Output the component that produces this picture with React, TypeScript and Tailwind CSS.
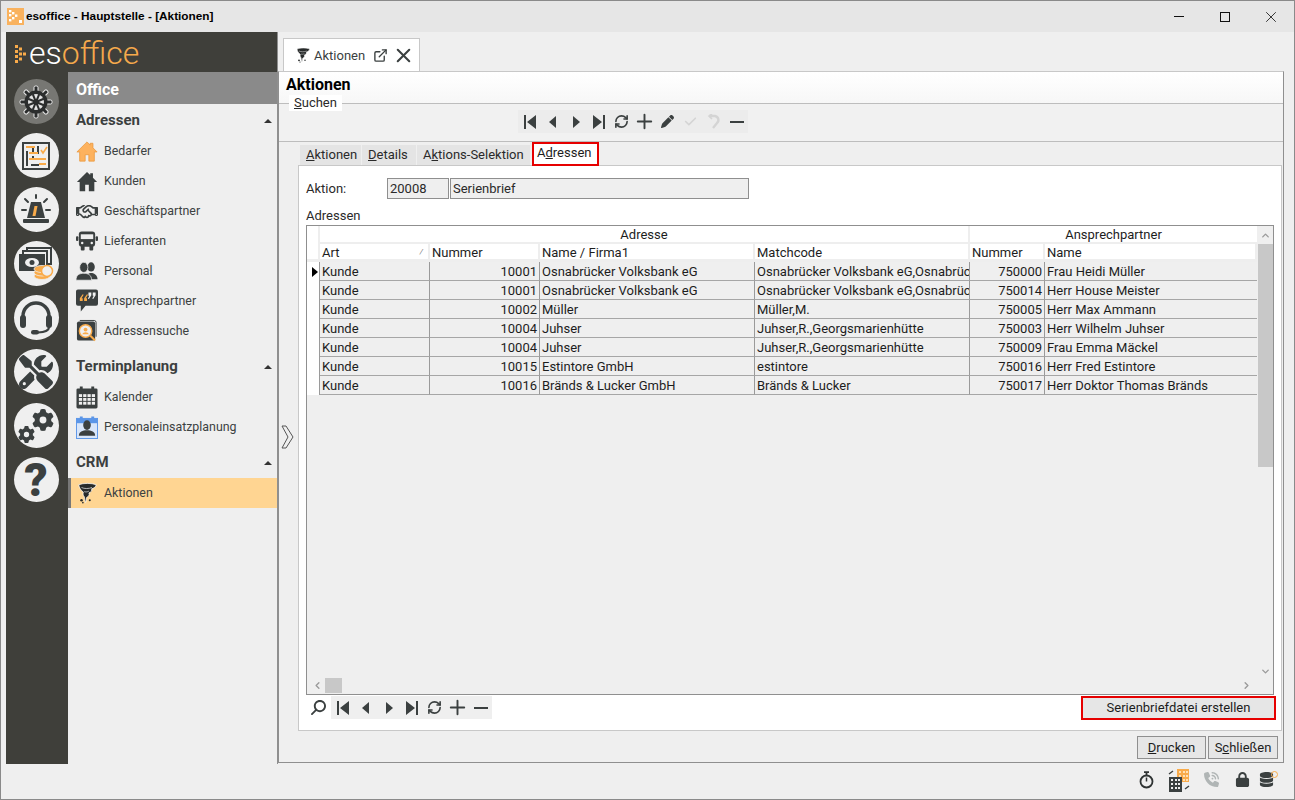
import React from 'react';
import { FaScrewdriverWrench, FaGear, FaRegHandshake, FaPhoneVolume, FaLock, FaDatabase, FaPen, FaCheck, FaMagnifyingGlass } from 'react-icons/fa6';
import { ExternalLink, X, Plus, RefreshCw, ChevronUp, ChevronDown, ChevronLeft, ChevronRight } from 'lucide-react';

const DARK = '#3b4040';
const ORANGE = '#f9ab4a';

const House: React.FC<{ fill: string; stroke?: string }> = ({ fill, stroke }) => (
  <svg width="23" height="23" viewBox="0 0 24 24">
    <polygon
      points="12,1.5 1,12.5 4,12.5 4,22.5 10,22.5 10,15.5 14,15.5 14,22.5 20,22.5 20,12.5 23,12.5 18.5,8 18.5,3 15.5,3 15.5,5"
      fill={fill}
      stroke={stroke}
      strokeWidth="0.8"
    />
  </svg>
);

const TruckFront = () => (
  <svg width="23" height="20" viewBox="0 0 23 20">
    <rect x="3" y="0" width="17" height="16" rx="3" fill={DARK} />
    <rect x="0" y="5" width="2.5" height="5" rx="1" fill={DARK} />
    <rect x="20.5" y="5" width="2.5" height="5" rx="1" fill={DARK} />
    <rect x="5" y="3" width="13" height="5" fill="#efefef" />
    <rect x="5" y="15" width="4" height="5" rx="1" fill={DARK} />
    <rect x="14" y="15" width="4" height="5" rx="1" fill={DARK} />
    <circle cx="6.5" cy="12" r="1.3" fill="#efefef" />
    <circle cx="16.5" cy="12" r="1.3" fill="#efefef" />
  </svg>
);

const People = () => (
  <svg width="24" height="21" viewBox="0 0 24 21" fill={DARK}>
    <ellipse cx="16.5" cy="5.5" rx="4" ry="5" />
    <path d="M11 19c0-5 3-7 5.5-7s7 2 7 7z" />
    <ellipse cx="8.5" cy="6" rx="4.5" ry="5.5" stroke="#efefef" strokeWidth="0.8" />
    <path d="M0 20c0-6 4-7.500 8.500-7.500s8.500 1.500 8.500 7.500z" stroke="#efefef" strokeWidth="0.8" />
  </svg>
);

const QuoteBubble = () => (
  <svg width="23" height="24" viewBox="0 0 23 24">
    <path d="M2 0h19a2 2 0 0 1 2 2v13a2 2 0 0 1-2 2H10l-5 6v-6H2a2 2 0 0 1-2-2V2a2 2 0 0 1 2-2z" fill={DARK} />
    <path d="M7 5L4 9v3h3V9H5.800L8 5.500zM11.500 5L8.500 9v3h3V9h-1.200L12.500 5.500z" fill={ORANGE} />
    <path d="M13 3h3v3l-2.500 4-1-.5L14 6.500h-1zM17.500 3h3v3L18 10l-1-.5 1.500-3h-1z" fill="#f3f3f3" />
  </svg>
);

const AddressSearch = () => (
  <svg width="23" height="24" viewBox="0 0 23 24">
    <rect x="1" y="2" width="19" height="20" rx="2" fill={DARK} />
    <path d="M4 1h15a2 2 0 0 1 2 2v15" stroke={DARK} fill="none" />
    <circle cx="10" cy="12" r="6.500" fill="#efefef" stroke={ORANGE} strokeWidth="1.500" />
    <circle cx="10" cy="10.500" r="2" fill={ORANGE} />
    <path d="M6.500 15.500c1-3 6-3 7 0z" fill={ORANGE} />
    <path d="M15 17l5 5" stroke={ORANGE} strokeWidth="2.200" />
  </svg>
);

const CalendarIcon = () => (
  <svg width="23" height="23" viewBox="0 0 23 23">
    <rect x="0.500" y="2" width="22" height="21" rx="1.500" fill={DARK} />
    <rect x="4" y="0" width="3" height="3" fill={DARK} />
    <rect x="16" y="0" width="3" height="3" fill={DARK} />
    <g fill="#efefef">
      {[8, 12, 16].flatMap((y) =>
        [3, 7.5, 12, 16.5].map((x) => <rect key={`${x}-${y}`} x={x} y={y} width="3.400" height="3" />),
      )}
    </g>
  </svg>
);

const StaffCalendar = () => (
  <svg width="23" height="23" viewBox="0 0 23 23">
    <rect x="0.500" y="2" width="22" height="21" fill="#d8e6fa" stroke="#5b96e8" />
    <rect x="0.500" y="2" width="22" height="5" fill="#5b96e8" />
    <rect x="4" y="0" width="3" height="3" fill="#5b96e8" />
    <rect x="16" y="0" width="3" height="3" fill="#5b96e8" />
    <ellipse cx="11.500" cy="9" rx="4" ry="5" fill={DARK} />
    <path d="M3 20c0-4 4-5.500 8.500-5.500S20 16 20 20z" fill={DARK} />
  </svg>
);

const Tornado: React.FC<{ size: number }> = ({ size }) => (
  <svg width={size} height={size} viewBox="0 0 24 24">
    <path
      d="M3 3C8 1 17 1 22 3C22 5 20 6.500 17 7.500C18 9 16.500 11 14 12C15.500 14 13 16 11.500 17C11 18.500 11.500 20 10.500 22.500C9.500 20 9.500 18 9 16C7.500 14.500 7.500 12.500 8 11C5 9 3.500 6 3 3z"
      fill="#272a2a"
      stroke="#ffffff"
      strokeWidth="0.800"
    />
    <path d="M6 6c3 1.500 8 1.500 11.500 0M9 10.500c1.500.5 3 .5 5-.5" stroke="#ffffff" strokeWidth="0.700" fill="none" />
    <circle cx="6" cy="20" r="1.400" fill="#272a2a" />
    <circle cx="15" cy="20" r="1.100" fill="#272a2a" />
    <circle cx="7.500" cy="22.500" r="0.900" fill="#272a2a" />
  </svg>
);

const ShipWheel = () => (
  <svg width="36" height="36" viewBox="0 0 36 36">
    {[0, 45, 90, 135, 180, 225, 270, 315].map((a) => (
      <g key={a} transform={`rotate(${a} 18 18)`}>
        <rect x="16" y="2" width="4" height="9" rx="1.500" fill="#2b2d2d" stroke="#ececec" strokeWidth="1" />
      </g>
    ))}
    <circle cx="18" cy="18" r="11.500" fill="#2b2d2d" />
    <circle cx="18" cy="18" r="8" fill="#e4e4e4" />
    {[0, 45, 90, 135].map((a) => (
      <rect key={a} x="17" y="9.500" width="2" height="17" fill="#2b2d2d" transform={`rotate(${a + 22.5} 18 18)`} />
    ))}
    <circle cx="18" cy="18" r="3" fill="#2b2d2d" />
  </svg>
);

const PlanBoard = () => (
  <svg width="28" height="28" viewBox="0 0 28 28">
    <rect x="1" y="1" width="26" height="26" fill="none" stroke={DARK} strokeWidth="2" />
    <g fill={DARK}>
      <rect x="4" y="9" width="2" height="15" />
      <rect x="10" y="4" width="2" height="6" />
      <rect x="10" y="14" width="2" height="4" />
      <rect x="15" y="4" width="2" height="8" />
      <rect x="9" y="22" width="8" height="2" />
    </g>
    <g fill={ORANGE}>
      <rect x="4" y="4" width="9" height="2" />
      <rect x="7" y="10" width="9" height="2" />
      <rect x="7" y="16" width="17" height="2" />
      <rect x="17" y="21" width="7" height="2" />
    </g>
    <path d="M19 8l2 3 4-6" fill="none" stroke={ORANGE} strokeWidth="1.600" />
  </svg>
);

const Siren = () => (
  <svg width="34" height="34" viewBox="0 0 34 34">
    <g stroke={DARK} strokeWidth="2" strokeLinecap="round">
      <path d="M17 2v3M6 6l3 3M28 6l-3 3M3 17h4M27 17h4" />
    </g>
    <path d="M12 9h10l4 16H8z" fill={DARK} />
    <path d="M15.500 13h3l-2 10h-3z" fill={ORANGE} />
    <rect x="4" y="26" width="26" height="4" rx="1" fill={DARK} />
  </svg>
);

const MoneyCoins = () => (
  <svg width="36" height="34" viewBox="0 0 36 34">
    <rect x="9" y="1" width="24" height="16" fill="none" stroke={DARK} strokeWidth="2" />
    <rect x="5" y="4" width="24" height="16" fill="#efefef" stroke={DARK} strokeWidth="2" />
    <rect x="1" y="7" width="26" height="17" fill={DARK} />
    <ellipse cx="14" cy="15.500" rx="7" ry="4.500" fill="#efefef" />
    <circle cx="14" cy="15.500" r="2.500" fill={DARK} />
    <g fill={ORANGE} stroke="#efefef" strokeWidth="0.800">
      <ellipse cx="24" cy="29" rx="8" ry="3.500" />
      <ellipse cx="24" cy="25.500" rx="8" ry="3.500" />
      <ellipse cx="24" cy="22" rx="8" ry="3.500" />
    </g>
    <circle cx="29" cy="24" r="5.500" fill="#efefef" stroke={ORANGE} strokeWidth="1.500" />
  </svg>
);

const Headset = () => (
  <svg width="36" height="36" viewBox="0 0 36 36" fill="none">
    <path d="M5 21V16a13 13 0 0 1 26 0v5" stroke={DARK} strokeWidth="3.400" />
    <rect x="2" y="15" width="6" height="13" rx="3" fill={DARK} />
    <rect x="28" y="15" width="6" height="13" rx="3" fill={DARK} />
    <path d="M31 27c0 4-4 5-11 5.500" stroke={DARK} strokeWidth="2" />
    <rect x="13" y="30" width="8" height="4.500" rx="2.250" fill={DARK} />
  </svg>
);

const Stopwatch = () => (
  <svg width="15" height="18" viewBox="0 0 15 18" fill="none" stroke="#2f3333">
    <circle cx="7.500" cy="10.500" r="6" strokeWidth="1.800" />
    <path d="M7.500 10.500V6.500" strokeWidth="1.500" />
    <path d="M5 1.200h5M7.500 1.500V4" strokeWidth="1.800" />
  </svg>
);

const Building = () => (
  <svg width="24" height="24" viewBox="0 0 24 24">
    <g fill={ORANGE}>
      <rect x="9" y="1" width="12" height="13" />
    </g>
    <g fill="#ffe0b5">
      {[3, 7, 11].flatMap((y) => [11, 15, 18].map((x) => <rect key={`${x}-${y}`} x={x} y={y} width="2" height="2" />))}
    </g>
    <rect x="1" y="9" width="13" height="15" fill={DARK} />
    <g fill="#efefef">
      {[11, 15, 19].flatMap((y) => [3, 7, 10].map((x) => <rect key={`${x}-${y}`} x={x} y={y} width="2" height="2" />))}
    </g>
    <path d="M1 6l4-3M17 21l4-3" stroke={DARK} strokeWidth="1.400" fill="none" />
  </svg>
);

const Logo = () => (
  <div className="flex items-center pl-2 h-10">
    <svg width="15" height="18" viewBox="0 0 15 18" className="mt-1">
      <g fill={ORANGE}>
        <rect x="1" y="0" width="3" height="3" />
        <rect x="5" y="2.500" width="3" height="3" />
        <rect x="1" y="5" width="3" height="3" />
        <rect x="5" y="7.500" width="3" height="3" />
        <rect x="9" y="7.500" width="3" height="3" />
        <rect x="1" y="10" width="3" height="3" />
        <rect x="5" y="12.500" width="3" height="3" />
        <rect x="1" y="15" width="3" height="3" />
      </g>
    </svg>
    <span className="text-[32px] leading-10 font-light text-white mt-[2px]">
      es<span className="text-[#f5a94c]">office</span>
    </span>
  </div>
);

const RailIcon: React.FC<{ active?: boolean; children: React.ReactNode }> = ({ active, children }) => (
  <div
    className={`w-[45px] h-[45px] rounded-full flex items-center justify-center ${
      active ? 'bg-[#777773]' : 'bg-[#efefef]'
    }`}
  >
    {children}
  </div>
);

const Rail = () => (
  <div className="w-[62px] bg-[#3f3f3a] flex flex-col items-center gap-[9px] pt-[7px] pr-[2px]">
    <RailIcon active>
      <ShipWheel />
    </RailIcon>
    <RailIcon>
      <PlanBoard />
    </RailIcon>
    <RailIcon>
      <Siren />
    </RailIcon>
    <RailIcon>
      <MoneyCoins />
    </RailIcon>
    <RailIcon>
      <Headset />
    </RailIcon>
    <RailIcon>
      <FaScrewdriverWrench size={34} color={DARK} />
    </RailIcon>
    <RailIcon>
      <div className="w-[36px] h-[34px] flex">
        <FaGear size={17} color={DARK} className="self-end" />
        <FaGear size={22} color={DARK} className="self-start -ml-[3px]" />
      </div>
    </RailIcon>
    <RailIcon>
      <span className="text-[46px] leading-none font-black text-[#3b4040]">?</span>
    </RailIcon>
  </div>
);

const MenuHeading: React.FC<{ label: string }> = ({ label }) => (
  <div className="h-[31px] flex items-center justify-between pl-2 pr-[5px] font-bold text-[15px] text-[#3c3f3f]">
    <span>{label}</span>
    <span className="w-0 h-0 border-x-[4px] border-x-transparent border-b-[4px] border-b-[#333]" />
  </div>
);

const MenuItem: React.FC<{ icon: React.ReactNode; label: string; active?: boolean }> = ({ icon, label, active }) => (
  <div
    className={`h-[30px] flex items-center text-[12.4px] text-[#3c4242] ${
      active ? 'bg-[#ffd592] border-l-[3px] border-l-[#777]' : 'border-l-[3px] border-l-transparent'
    }`}
  >
    <span className="w-[22px] ml-[5px] mr-[6px] flex justify-center shrink-0">{icon}</span>
    <span>{label}</span>
  </div>
);

const Menu = () => (
  <div className="w-[209px] flex flex-col">
    <div className="h-8 bg-[#8a8a8a] text-white font-bold text-[16px] flex items-center pl-2 pt-[3px]">Office</div>
    <div className="flex-1 bg-[#efefef] pt-[1px]">
      <MenuHeading label="Adressen" />
      <MenuItem icon={<House fill="#fdb25e" stroke="#e8963a" />} label="Bedarfer" />
      <MenuItem icon={<House fill={DARK} />} label="Kunden" />
      <MenuItem icon={<FaRegHandshake size={23} color={DARK} />} label="Geschäftspartner" />
      <MenuItem icon={<TruckFront />} label="Lieferanten" />
      <MenuItem icon={<People />} label="Personal" />
      <MenuItem icon={<QuoteBubble />} label="Ansprechpartner" />
      <MenuItem icon={<AddressSearch />} label="Adressensuche" />
      <div className="h-[5px]" />
      <MenuHeading label="Terminplanung" />
      <MenuItem icon={<CalendarIcon />} label="Kalender" />
      <MenuItem icon={<StaffCalendar />} label="Personaleinsatzplanung" />
      <div className="h-[5px]" />
      <MenuHeading label="CRM" />
      <MenuItem icon={<Tornado size={24} />} label="Aktionen" active />
    </div>
  </div>
);

const Glyph: React.FC<{ kind: 'first' | 'prev' | 'next' | 'last' }> = ({ kind }) => (
  <svg width="14" height="14" viewBox="0 0 14 14" fill={DARK}>
    {kind === 'first' && <path d="M1 0h2v14H1zM13 0v14L4 7z" />}
    {kind === 'prev' && <path d="M10 1v12L3 7z" />}
    {kind === 'next' && <path d="M4 1v12l7-6z" />}
    {kind === 'last' && <path d="M11 0h2v14h-2zM1 0v14l9-7z" />}
  </svg>
);

const UndoGlyph = () => (
  <svg width="14" height="16" viewBox="0 0 14 16" fill="none" stroke="#d4d4d4" strokeWidth="2.400">
    <path d="M2 2h6a4 4 0 0 1 2 7l-4 5" />
    <path d="M5 0L2 2l3 3" strokeWidth="1.600" />
  </svg>
);

const ToolCell: React.FC<{ children: React.ReactNode }> = ({ children }) => (
  <span className="w-[23px] h-full flex items-center justify-center">{children}</span>
);

const NavStart = () => (
  <>
    <ToolCell>
      <Glyph kind="first" />
    </ToolCell>
    <ToolCell>
      <Glyph kind="prev" />
    </ToolCell>
    <ToolCell>
      <Glyph kind="next" />
    </ToolCell>
    <ToolCell>
      <Glyph kind="last" />
    </ToolCell>
    <ToolCell>
      <RefreshCw size={15} color={DARK} strokeWidth={2.6} />
    </ToolCell>
    <ToolCell>
      <Plus size={23} color={DARK} strokeWidth={2} />
    </ToolCell>
  </>
);

const MinusTool = () => (
  <ToolCell>
    <span className="w-[14px] h-[2px] bg-[#3b4040]" />
  </ToolCell>
);

const Fieldish: React.FC<{ className: string; children: React.ReactNode }> = ({ className, children }) => (
  <div className={`h-[21px] border border-[#8f8f8f] bg-[#efefef] px-[2px] flex items-center ${className}`}>{children}</div>
);

type Row = { art: string; nr: string; name: string; match: string; anr: string; aname: string };

const rows: Row[] = [
  { art: 'Kunde', nr: '10001', name: 'Osnabrücker Volksbank eG', match: 'Osnabrücker Volksbank eG,Osnabrück', anr: '750000', aname: 'Frau Heidi Müller' },
  { art: 'Kunde', nr: '10001', name: 'Osnabrücker Volksbank eG', match: 'Osnabrücker Volksbank eG,Osnabrück', anr: '750014', aname: 'Herr House Meister' },
  { art: 'Kunde', nr: '10002', name: 'Müller', match: 'Müller,M.', anr: '750005', aname: 'Herr Max Ammann' },
  { art: 'Kunde', nr: '10004', name: 'Juhser', match: 'Juhser,R.,Georgsmarienhütte', anr: '750003', aname: 'Herr Wilhelm Juhser' },
  { art: 'Kunde', nr: '10004', name: 'Juhser', match: 'Juhser,R.,Georgsmarienhütte', anr: '750009', aname: 'Frau Emma Mäckel' },
  { art: 'Kunde', nr: '10015', name: 'Estintore GmbH', match: 'estintore', anr: '750016', aname: 'Herr Fred Estintore' },
  { art: 'Kunde', nr: '10016', name: 'Bränds & Lucker GmbH', match: 'Bränds & Lucker', anr: '750017', aname: 'Herr Doktor Thomas Bränds' },
];

const headCell = 'h-[18px] p-0 pl-[2px] pt-[1px] font-normal text-left bg-white border-r-2 border-r-[#eeeeee] border-b-[3px] border-b-[#eeeeee] overflow-hidden whitespace-nowrap';
const bodyCell = 'h-[19px] p-0 px-[2px] bg-[#efefef] border-r border-r-[#9a9a9a] border-b border-b-[#a6a6a6] overflow-hidden whitespace-nowrap';

const AddressGrid = () => (
  <div className="h-[470px] border border-[#8f8f8f] bg-[#efefef] flex flex-col">
    <div className="flex-1 flex min-h-0">
      <div className="w-[950px] shrink-0">
        <table className="w-[950px] table-fixed border-separate border-spacing-0 text-[13px] leading-none text-[#1d1d1d]">
          <colgroup>
            <col className="w-[13px]" />
            <col className="w-[110px]" />
            <col className="w-[110px]" />
            <col className="w-[215px]" />
            <col className="w-[215px]" />
            <col className="w-[75px]" />
            <col className="w-[212px]" />
          </colgroup>
          <thead>
            <tr>
              <th className="bg-white border-r-2 border-r-[#eeeeee]" />
              <th colSpan={4} className="h-[18px] p-0 pt-[1px] font-normal text-center bg-white border-r-2 border-r-[#eeeeee] border-b-2 border-b-[#eeeeee]">
                Adresse
              </th>
              <th colSpan={2} className="h-[18px] p-0 pt-[1px] font-normal text-center bg-white border-b-2 border-b-[#eeeeee]">
                Ansprechpartner
              </th>
            </tr>
            <tr>
              <th className="bg-white border-r-2 border-r-[#eeeeee] border-b-[3px] border-b-[#eeeeee]" />
              <th className={headCell}>
                <span className="flex items-center justify-between pr-[5px]">
                  Art
                  <span className="text-[8px] text-[#777] italic">/</span>
                </span>
              </th>
              <th className={headCell}>Nummer</th>
              <th className={headCell}>Name / Firma1</th>
              <th className={headCell}>Matchcode</th>
              <th className={headCell}>Nummer</th>
              <th className={headCell}>Name</th>
            </tr>
          </thead>
          <tbody>
            {rows.map((r, i) => (
              <tr key={i}>
                <td className="h-[19px] p-0 bg-white border-r border-r-[#9a9a9a]">
                  {i === 0 && (
                    <span className="ml-[5px] block w-0 h-0 border-y-[5px] border-y-transparent border-l-[6px] border-l-black" />
                  )}
                </td>
                <td className={bodyCell}>{r.art}</td>
                <td className={`${bodyCell} text-right`}>{r.nr}</td>
                <td className={bodyCell}>{r.name}</td>
                <td className={bodyCell}>{r.match}</td>
                <td className={`${bodyCell} text-right`}>{r.anr}</td>
                <td className={`${bodyCell} border-r-0`}>{r.aname}</td>
              </tr>
            ))}
          </tbody>
        </table>
      </div>
      {/* vertical scrollbar */}
      <div className="w-[15px] ml-[1px] flex flex-col items-center">
        <span className="h-[18px] flex items-center">
          <ChevronUp size={11} color="#9a9a9a" strokeWidth={3} />
        </span>
        <div className="w-full h-[223px] bg-[#c8c8c8]" />
        <div className="flex-1" />
        <span className="h-[14px] flex items-center">
          <ChevronDown size={11} color="#9a9a9a" strokeWidth={3} />
        </span>
      </div>
    </div>
    {/* horizontal scrollbar */}
    <div className="h-[16px] pb-[1px] flex items-center pl-[5px] pr-[21px]">
      <ChevronLeft size={11} color="#9a9a9a" strokeWidth={3} />
      <div className="ml-[2px] w-[17px] h-[15px] bg-[#c8c8c8]" />
      <div className="flex-1" />
      <ChevronRight size={11} color="#9a9a9a" strokeWidth={3} />
    </div>
  </div>
);

const SubTab: React.FC<{ children: React.ReactNode; className: string }> = ({ children, className }) => (
  <div className={`h-5 bg-[#e4e4e4] flex items-center mr-[1px] text-[#2a2a2a] ${className}`}>{children}</div>
);

const Main = () => (
  <div className="flex-1 flex flex-col">
    {/* document tab strip */}
    <div className="h-[39px] flex items-end pl-[5px] shrink-0">
      <div className="h-[33px] w-[137px] bg-white border border-b-0 border-[#c8c8c8] flex items-center pl-[11px] text-[13px] text-[#3a3f3f]">
        <Tornado size={16} />
        <span className="ml-[3px] pt-[1px]">Aktionen</span>
        <ExternalLink size={15} color={DARK} strokeWidth={2.2} className="ml-[8px]" />
        <X size={23} color={DARK} strokeWidth={2.2} className="ml-[4px]" />
      </div>
    </div>
    <div className="h-[692px] border border-[#8f8f8f] border-t-[#c8c8c8] flex flex-col bg-[#efefef]">
      <div className="h-[31px] bg-gradient-to-b from-white to-[#f7f7f7] pl-[7px] pt-[3px] font-bold text-[16px] leading-5 text-black shrink-0">
        Aktionen
      </div>
      <fieldset className="h-[39px] border-t border-b border-[#bdbdbd] bg-[#f1f1f1] shrink-0 relative">
        <legend className="absolute -top-[9px] left-[10px] px-[5px] leading-[16px] text-[13px] bg-white text-[#2a2a2a]">
          <u>S</u>uchen
        </legend>
        <div className="ml-[239px] mt-[6px] h-[23px] w-[230px] bg-[#ececec] flex items-center">
          <NavStart />
          <ToolCell>
            <FaPen size={13} color={DARK} />
          </ToolCell>
          <ToolCell>
            <FaCheck size={13} color="#d4d4d4" />
          </ToolCell>
          <ToolCell>
            <UndoGlyph />
          </ToolCell>
          <MinusTool />
        </div>
      </fieldset>
      <div className="flex-1 flex min-h-0">
        <div className="w-[19px] flex items-center justify-start pb-[30px] pl-[2px]">
          <svg width="14" height="24" viewBox="0 0 14 24" fill="#efefef" stroke="#555" strokeWidth="1">
            <path d="M1 1h4l7 11-7 11H1l6-11z" />
          </svg>
        </div>
        <div className="flex-1 flex flex-col">
          {/* sub tabs */}
          <div className="h-[23px] flex items-end text-[13px] relative z-10">
            <SubTab className="w-[61px] ml-[2px] pl-[6px]">
              <span>
                <u>A</u>ktionen
              </span>
            </SubTab>
            <SubTab className="w-[54px] pl-[6px]">
              <span>
                <u>D</u>etails
              </span>
            </SubTab>
            <SubTab className="w-[113px] pl-[6px]">
              <span>
                A<u>k</u>tions-Selektion
              </span>
            </SubTab>
            <div className="h-[24px] w-[67px] ml-[1px] -mb-[1px] bg-white border-2 border-[#e60000] flex items-center pl-[3px] pb-[2px] text-[#1d1d1d]">
              <span>
                A<u>d</u>ressen
              </span>
            </div>
          </div>
          <div className="h-[566px] mr-[1px] bg-white border border-[#c8c8c8] pl-[7px] pr-[7px] text-[13px] text-[#2a2a2a] shrink-0">
            <div className="flex items-center mt-[12px] h-[21px]">
              <span className="w-[81px]">Aktion:</span>
              <Fieldish className="w-[62px]">20008</Fieldish>
              <Fieldish className="w-[299px] ml-[1px]">Serienbrief</Fieldish>
            </div>
            <div className="mt-[7px] h-[19px] leading-[19px]">Adressen</div>
            <AddressGrid />
            <div className="flex items-start h-[25px] mt-[1px]">
              <span className="w-[25px] h-[23px] flex items-center justify-center">
                <FaMagnifyingGlass size={15} color={DARK} className="-scale-x-100" />
              </span>
              <div className="h-[23px] w-[161px] bg-[#efefef] flex items-center">
                <NavStart />
                <MinusTool />
              </div>
              <div className="flex-1" />
              <div className="h-[24px] w-[195px] mr-[-2px] bg-[#e6e6e6] border-2 border-[#e60000] flex items-center justify-center text-[#1d1d1d]">
                Serienbriefdatei erstellen
              </div>
            </div>
          </div>
          <div className="flex-1 flex items-start justify-end gap-[2px] pr-[5px] pt-[5px] text-[13px] text-[#1d1d1d]">
            <div className="h-[23px] w-[69px] bg-[#e6e6e6] border border-[#8f8f8f] flex items-center justify-center">
              <span>
                <u>D</u>rucken
              </span>
            </div>
            <div className="h-[23px] w-[70px] bg-[#e6e6e6] border border-[#8f8f8f] flex items-center justify-center">
              <span>
                S<u>c</u>hließen
              </span>
            </div>
          </div>
        </div>
      </div>
    </div>
  </div>
);

const StatusBar = () => (
  <div className="h-[35px] flex items-center justify-end pb-[4px] pr-[20px] shrink-0">
    <Stopwatch />
    <span className="ml-[14px]">
      <Building />
    </span>
    <span className="ml-[12px]">
      <FaPhoneVolume size={15} color="#b0b5b5" />
    </span>
    <span className="ml-[16px]">
      <FaLock size={15} color={DARK} />
    </span>
    <span className="ml-[9px] relative">
      <FaDatabase size={15} color={DARK} />
      <span className="absolute -top-[1px] -right-[4px] w-[7px] h-[7px] rounded-full border border-[#f9ab4a]" />
    </span>
  </div>
);

export default function App() {
  return (
    <div className="w-[1295px] h-[800px] overflow-hidden bg-[#efefef] border border-[#8a8a8a] flex flex-col font-['Roboto',sans-serif]">
      <div className="h-[31px] bg-[#e6e6e6] flex items-center pl-[6px] shrink-0">
        <svg width="17" height="17" viewBox="0 0 17 17">
          <rect width="17" height="17" fill="#f9b25e" />
          <g fill="#fff">
            <rect x="2" y="2" width="2.400" height="2.400" />
            <rect x="5" y="4" width="2.400" height="2.400" />
            <rect x="2" y="6" width="2.400" height="2.400" />
            <rect x="8" y="6.500" width="2.400" height="2.400" />
            <rect x="5" y="9" width="2.400" height="2.400" />
            <rect x="2" y="11" width="2.400" height="2.400" />
            <rect x="12" y="12" width="3" height="3" />
          </g>
        </svg>
        <span className="ml-[2px] font-bold text-[11.8px] font-['Liberation_Sans',sans-serif] text-black">
          esoffice - Hauptstelle - [Aktionen]
        </span>
        <div className="flex-1" />
        <span className="w-[46px] flex justify-center">
          <span className="w-[10px] h-[1px] bg-[#111]" />
        </span>
        <span className="w-[46px] flex justify-center">
          <span className="w-[10px] h-[10px] border border-[#111]" />
        </span>
        <span className="w-[46px] flex justify-center">
          <X size={18} strokeWidth={1.1} color="#111" />
        </span>
      </div>
      <div className="h-[732px] flex pl-[5px] pr-[10px] shrink-0">
        <div className="w-[272px] shrink-0 flex flex-col border-r border-r-[#8f8f8f]">
          <div className="bg-[#3f3f3a] shrink-0">
            <Logo />
          </div>
          <div className="flex-1 flex min-h-0">
            <Rail />
            <Menu />
          </div>
        </div>
        <Main />
      </div>
      <StatusBar />
    </div>
  );
}
